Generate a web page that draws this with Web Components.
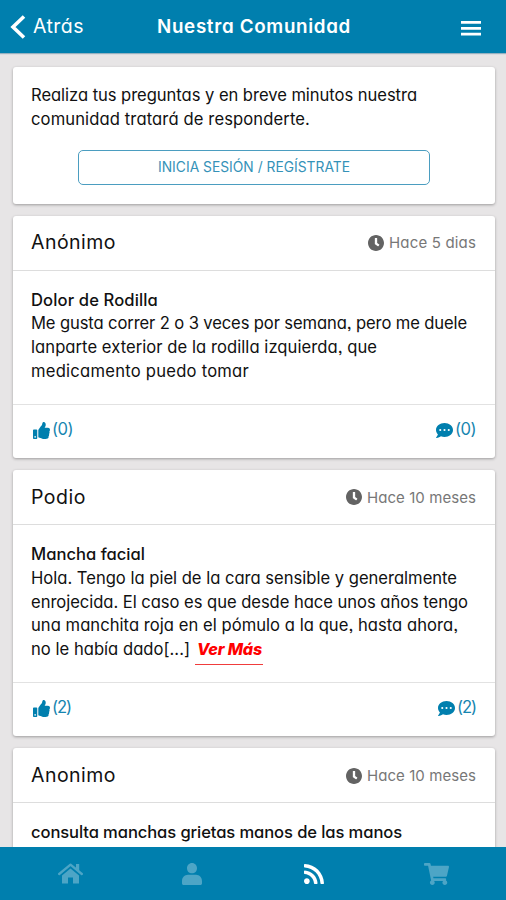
<!DOCTYPE html>
<html lang="es">
<head>
<meta charset="UTF-8">
<meta name="viewport" content="width=device-width, initial-scale=1.0">
<title>Nuestra Comunidad</title>
<style>
    html, body { height: 100%; }
    body {
        margin: 0;
        overflow: hidden;
        background: #e7e5e6;
        color: #111;
        font-family: Inter, "Liberation Sans", sans-serif;
        font-feature-settings: "cv11", "ss03";
        font-size: 16.6px;
        --brand: #007fae;
    }
</style>
</head>
<body>
<community-app>
    <app-header slot="header" back="Atrás" heading="Nuestra Comunidad"></app-header>

    <login-card>
        <text-line width="386">Realiza tus preguntas y en breve minutos nuestra</text-line>
        <text-line width="279">comunidad tratará de responderte.</text-line>
    </login-card>

    <question-card author="Anónimo" author-width="85" ago="Hace 5 dias" ago-width="87" likes="0" comments="0">
        <text-line width="127" bold>Dolor de Rodilla</text-line>
        <text-line width="436">Me gusta correr 2 o 3 veces por semana, pero me duele</text-line>
        <text-line width="346">lanparte exterior de la rodilla izquierda, que</text-line>
        <text-line width="218">medicamento puedo tomar</text-line>
    </question-card>

    <question-card author="Podio" author-width="55" ago="Hace 10 meses" ago-width="109" likes="2" comments="2">
        <text-line width="114" bold>Mancha facial</text-line>
        <text-line width="426">Hola. Tengo la piel de la cara sensible y generalmente</text-line>
        <text-line width="437">enrojecida. El caso es que desde hace unos años tengo</text-line>
        <text-line width="427">una manchita roja en el pómulo a la que, hasta ahora,</text-line>
        <text-line slot="last" width="159">no le había dado[...]</text-line>
        <read-more slot="last">Ver Más</read-more>
    </question-card>

    <question-card author="Anonimo" author-width="85" ago="Hace 10 meses" ago-width="109" likes="0" comments="0">
        <text-line width="371" bold>consulta manchas grietas manos de las manos</text-line>
    </question-card>

    <tab-bar slot="footer" active="rss"></tab-bar>
</community-app>

<script>
const ICONS = {
    back: ['0 0 16 24', '<path d="M14 1.500 3 12l11 10.500" fill="none" stroke="currentColor" stroke-width="3.600"/>'],
    menu: ['0 0 20 15', '<path d="M0 0h20v2.800H0zM0 5.900h20v2.800H0zM0 11.800h20v2.800H0z"/>'],
    clock: ['8 8 496 496', '<path d="M256 8C119 8 8 119 8 256s111 248 248 248 248-111 248-248S393 8 256 8zm57.1 350.1L224.9 294c-3.1-2.3-4.9-5.9-4.9-9.7V116c0-6.600 5.400-12 12-12h48c6.600 0 12 5.400 12 12v137.700l63.500 46.200c5.400 3.900 6.500 11.400 2.600 16.800l-28.200 38.800c-3.900 5.300-11.400 6.500-16.800 2.600z"/>'],
    like: ['0 0 512 512', '<path d="M104 224H24c-13.255 0-24 10.745-24 24v240c0 13.255 10.745 24 24 24h80c13.255 0 24-10.745 24-24V248c0-13.255-10.745-24-24-24zM64 472c-13.255 0-24-10.745-24-24s10.745-24 24-24 24 10.745 24 24-10.745 24-24 24zM384 81.452c0 42.416-25.970 66.208-33.277 94.548h101.723c33.397 0 59.397 27.746 59.553 58.098.084 17.938-7.546 37.249-19.439 49.197l-.110.110c9.836 23.337 8.237 56.037-9.308 79.469 8.681 25.895-.069 57.704-16.382 74.757 4.298 17.598 2.244 32.575-6.148 44.632C440.202 511.587 389.616 512 346.839 512l-2.845-.001c-48.287-.017-87.806-17.598-119.560-31.725-15.957-7.099-36.821-15.887-52.651-16.178-6.540-.120-11.783-5.457-11.783-11.998v-213.770c0-3.200 1.282-6.271 3.558-8.521 39.614-39.144 56.648-80.587 89.117-113.111 14.804-14.832 20.188-37.236 25.393-58.902C282.515 39.293 291.817 0 312 0c24 0 72 8 72 81.452z"/>'],
    comment: ['0 32 512 448', '<path fill-rule="evenodd" d="M256 32C114.600 32 0 125.100 0 240c0 49.600 21.400 95 57 130.700C44.500 421.100 2.700 466 2.200 466.500c-2.200 2.300-2.800 5.700-1.500 8.700S4.800 480 8 480c66.300 0 116-31.800 140.600-51.400 32.700 12.300 69 19.400 107.400 19.400 141.400 0 256-93.100 256-208S397.400 32 256 32zM128 272a32 32 0 1 1 0-64 32 32 0 0 1 0 64zm128 0a32 32 0 1 1 0-64 32 32 0 0 1 0 64zm128 0a32 32 0 1 1 0-64 32 32 0 0 1 0 64z"/>'],
    home: ['0 0 25 21', '<path d="M1.200 11 12.500 1.700 23.800 11" fill="none" stroke="currentColor" stroke-width="2.300" stroke-linecap="round" stroke-linejoin="round"/><path d="M18 1h3.200v7L18 5.400zM12.500 5.500l8.500 7V20.500h-6V14.500h-5V20.500H4V12.500z"/>'],
    user: ['0 0 448 512', '<path d="M224 240c66 0 112-54 112-120S290 0 224 0 112 54 112 120s46 120 112 120zm89.600 36h-179.200C60.200 276 0 340 0 422.400V476c0 20 16 36 36 36h376c20 0 36-16 36-36v-53.600C448 340 387.800 276 313.600 276z"/>'],
    rss: ['0 32 448 448', '<path d="M128.081 415.959c0 35.369-28.672 64.041-64.041 64.041S0 451.328 0 415.959s28.672-64.041 64.041-64.041 64.040 28.673 64.040 64.041zm175.660 47.250c-8.354-154.600-132.185-278.587-286.950-286.950C7.656 175.765 0 183.105 0 192.253v48.069c0 8.415 6.490 15.472 14.887 16.018 111.832 7.284 201.473 96.702 208.772 208.772.547 8.397 7.604 14.887 16.018 14.887h48.069c9.149.001 16.489-7.655 15.995-16.790zm144.249.288C439.596 229.677 251.465 40.445 16.503 32.010 7.473 31.686 0 38.981 0 48.016v48.068c0 8.625 6.835 15.645 15.453 15.999 191.179 7.839 344.627 161.316 352.465 352.465.353 8.618 7.373 15.453 15.999 15.453h48.068c9.034-.001 16.329-7.474 16.005-16.504z"/>'],
    cart: ['0 0 576 512', '<path d="M528.120 301.319l47.273-208C578.806 78.301 567.391 64 551.990 64H159.208l-9.166-44.810C147.758 8.021 137.930 0 126.529 0H24C10.745 0 0 10.745 0 24v16c0 13.255 10.745 24 24 24h69.883l70.248 343.435C147.325 417.100 136 435.222 136 456c0 30.928 25.072 56 56 56s56-25.072 56-56c0-15.674-6.447-29.835-16.824-40h209.647C430.447 426.165 424 440.326 424 456c0 30.928 25.072 56 56 56s56-25.072 56-56c0-22.172-12.888-41.332-31.579-50.405l5.517-24.276c3.413-15.018-8.002-29.319-23.403-29.319H218.117l-6.545-32h293.145c11.206 0 20.920-7.754 23.403-18.681z"/>']
};

// Icon, sized by its host
class AppIcon extends HTMLElement {
    connectedCallback() {
        const [box, shape] = ICONS[this.getAttribute('name')];
        this.attachShadow({ mode: 'open' }).innerHTML = `
            <style>
                :host { display: block; flex: none; }
                svg { display: block; width: 100%; height: 100%; fill: currentColor; }
            </style>
            <svg viewBox="${box}" preserveAspectRatio="none" aria-hidden="true">${shape}</svg>
        `;
    }
}

// One line of text, tracked so that it fills the given width
class TextLine extends HTMLElement {
    connectedCallback() {
        this.attachShadow({ mode: 'open' }).innerHTML = `
            <style>
                :host { display: block; white-space: nowrap; line-height: 23.8px; }
                :host([bold]) { font-weight: 550; }
            </style>
            <span><slot></slot></span>
        `;
        this.fit();
    }

    fit() {
        const span = this.shadowRoot.querySelector('span');
        const width = Number(this.getAttribute('width'));
        const natural = span.getBoundingClientRect().width;
        const count = this.textContent.length;
        if (width && natural) {
            span.style.letterSpacing = `${(width - natural) / count}px`;
        }
    }
}

class ReadMore extends HTMLElement {
    connectedCallback() {
        this.attachShadow({ mode: 'open' }).innerHTML = `
            <style>
                :host {
                    display: block;
                    box-sizing: border-box;
                    width: 68px;
                    height: 27px;
                    padding-left: 2px;
                    border-bottom: 1px solid #f03c3c;
                    color: #f00;
                    font-size: 16.200px;
                    font-weight: 800;
                    font-style: italic;
                }
            </style>
            <text-line width="65">${this.textContent}</text-line>
        `;
    }
}

class AppHeader extends HTMLElement {
    connectedCallback() {
        this.attachShadow({ mode: 'open' }).innerHTML = `
            <style>
                :host {
                    display: grid;
                    grid-template-columns: 146px 1fr 51px;
                    align-items: center;
                    height: 53px;
                    background: var(--brand);
                    color: #fff;
                    box-shadow: 0 1px 1px rgba(0, 80, 120, .35);
                }
                .back { display: flex; align-items: center; gap: 7px; padding: 1px 0 0 10px; font-size: 19.500px; }
                .back app-icon { width: 16px; height: 24px; }
                h1 { margin: 0; padding: 1px 0 0 11px; font-size: 18.800px; font-weight: 620; }
                .menu { width: 20px; height: 15px; margin-left: 6px; margin-top: 3px; }
            </style>
            <div class="back">
                <app-icon name="back"></app-icon>
                <text-line width="51">${this.getAttribute('back')}</text-line>
            </div>
            <h1><text-line width="194">${this.getAttribute('heading')}</text-line></h1>
            <app-icon class="menu" name="menu"></app-icon>
        `;
    }
}

const CARD_CSS = `
    :host {
        display: block;
        box-sizing: border-box;
        background: #fff;
        border-radius: 3px;
        box-shadow: 0 1px 3px rgba(0, 0, 0, .32);
    }
`;

class LoginCard extends HTMLElement {
    connectedCallback() {
        this.attachShadow({ mode: 'open' }).innerHTML = `
            <style>
                ${CARD_CSS}
                :host { height: 136.500px; padding: 17px 17px 17px 18px; }
                button {
                    display: flex;
                    justify-content: center;
                    align-items: center;
                    width: 352px;
                    height: 35px;
                    margin: 18px 0 0 47px;
                    padding: 1px 0 0;
                    border: 1px solid #4b9dc0;
                    border-radius: 5px;
                    background: #fff;
                    color: #3592b8;
                    font: inherit;
                    font-size: 13.800px;
                }
            </style>
            <slot></slot>
            <button><text-line width="192">INICIA SESIÓN / REGÍSTRATE</text-line></button>
        `;
    }
}

class QuestionCard extends HTMLElement {
    connectedCallback() {
        const attr = name => this.getAttribute(name);
        this.attachShadow({ mode: 'open' }).innerHTML = `
            <style>
                ${CARD_CSS}
                header, footer { display: flex; justify-content: space-between; }
                header {
                    box-sizing: border-box;
                    height: 55px;
                    align-items: center;
                    padding: 1px 19px 0 18px;
                    border-bottom: 1px solid #ddd;
                }
                .author { font-size: 19.500px; }
                .ago { display: flex; align-items: center; gap: 5px; color: #777; font-size: 15px; }
                .ago app-icon { width: 16px; height: 16px; color: #636363; }
                .body { padding: 18px 0 20.300px 18px; }
                .last { display: flex; height: 23.800px; gap: 5px; }
                footer {
                    box-sizing: border-box;
                    height: 54px;
                    padding: 13px 19px 0 20px;
                    border-top: 1px solid #e2e2e2;
                    color: #1685b0;
                }
                .count { display: flex; align-items: flex-start; gap: 2px; }
                .count app-icon { width: 17px; height: 17px; margin-top: 4px; color: var(--brand); }
                .count app-icon[name="comment"] { height: 15px; margin-top: 5px; }
            </style>
            <header>
                <text-line class="author" width="${attr('author-width')}">${attr('author')}</text-line>
                <div class="ago">
                    <app-icon name="clock"></app-icon>
                    <text-line width="${attr('ago-width')}">${attr('ago')}</text-line>
                </div>
            </header>
            <div class="body">
                <slot></slot>
                ${this.querySelector('[slot=last]') ? '<div class="last"><slot name="last"></slot></div>' : ''}
            </div>
            <footer>
                <div class="count">
                    <app-icon name="like"></app-icon>
                    <text-line width="${attr('likes') === '0' ? 21 : 19}">(${attr('likes')})</text-line>
                </div>
                <div class="count">
                    <app-icon name="comment"></app-icon>
                    <text-line width="${attr('comments') === '0' ? 21 : 19}">(${attr('comments')})</text-line>
                </div>
            </footer>
        `;
    }
}

class TabBar extends HTMLElement {
    connectedCallback() {
        const active = this.getAttribute('active');
        const tabs = [['home', 25, 21], ['user', 20, 22], ['rss', 20, 20], ['cart', 25, 22]];
        this.attachShadow({ mode: 'open' }).innerHTML = `
            <style>
                :host {
                    display: grid;
                    grid-template-columns: repeat(4, 122px);
                    justify-content: center;
                    height: 53px;
                    background: var(--brand);
                    color: #4da5c6;
                }
                div { display: flex; align-items: center; justify-content: center; }
                .active { color: #fff; }
            </style>
            ${tabs.map(([name, w, h]) => `
                <div class="${name === active ? 'active' : ''}">
                    <app-icon name="${name}" style="width:${w}px;height:${h}px"></app-icon>
                </div>
            `).join('')}
        `;
    }
}

// Page frame: fixed bars with the feed between them
class CommunityApp extends HTMLElement {
    connectedCallback() {
        this.attachShadow({ mode: 'open' }).innerHTML = `
            <style>
                :host { display: grid; grid-template-rows: 53px minmax(0, 1fr) 53px; height: 100vh; }
                main {
                    display: flex;
                    flex-direction: column;
                    gap: 12px;
                    overflow: hidden;
                    padding: 14px 11px 0 13px;
                }
                main ::slotted(*) { flex: none; }
            </style>
            <slot name="header"></slot>
            <main><slot></slot></main>
            <slot name="footer"></slot>
        `;
    }
}

customElements.define('app-icon', AppIcon);
customElements.define('community-app', CommunityApp);
customElements.define('login-card', LoginCard);
customElements.define('question-card', QuestionCard);
customElements.define('text-line', TextLine);
customElements.define('read-more', ReadMore);
customElements.define('app-header', AppHeader);
customElements.define('tab-bar', TabBar);
</script>
</body>
</html>
